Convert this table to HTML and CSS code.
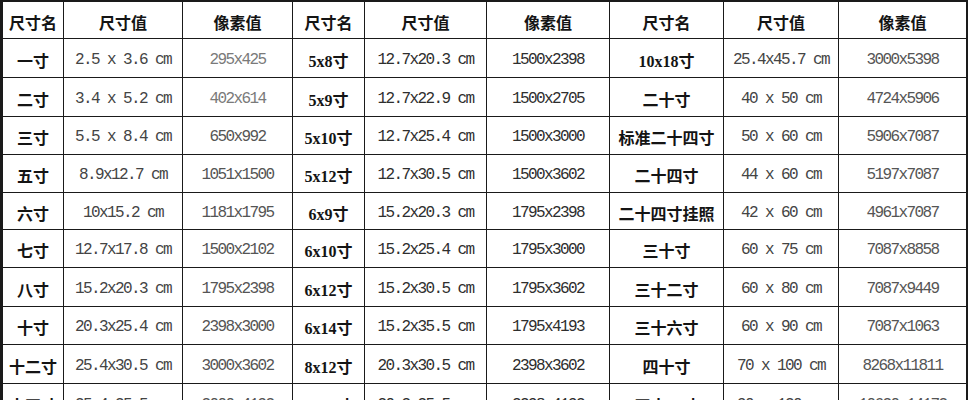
FILE: index.html
```html
<!DOCTYPE html>
<html lang="zh">
<head>
<meta charset="utf-8">
<title>照片尺寸对照表</title>
<link rel="stylesheet" href="styles.css">
</head>
<body>
<div class="sheet">
  <div class="c h">尺寸名</div><div class="c h">尺寸值</div><div class="c h">像素值</div><div class="c h">尺寸名</div><div class="c h">尺寸值</div><div class="c h">像素值</div><div class="c h">尺寸名</div><div class="c h">尺寸值</div><div class="c h">像素值</div>

  <div class="c n">一寸</div><div class="c v">2.5 x 3.6 cm</div><div class="c p light">295x425</div><div class="c m">5x8寸</div><div class="c v dark">12.7x20.3 cm</div><div class="c p dark">1500x2398</div><div class="c m">10x18寸</div><div class="c v">25.4x45.7 cm</div><div class="c p">3000x5398</div>

  <div class="c n">二寸</div><div class="c v">3.4 x 5.2 cm</div><div class="c p light">402x614</div><div class="c m">5x9寸</div><div class="c v dark">12.7x22.9 cm</div><div class="c p dark">1500x2705</div><div class="c n">二十寸</div><div class="c v">40 x 50 cm</div><div class="c p">4724x5906</div>

  <div class="c n">三寸</div><div class="c v">5.5 x 8.4 cm</div><div class="c p">650x992</div><div class="c m">5x10寸</div><div class="c v dark">12.7x25.4 cm</div><div class="c p dark">1500x3000</div><div class="c n">标准二十四寸</div><div class="c v">50 x 60 cm</div><div class="c p">5906x7087</div>

  <div class="c n">五寸</div><div class="c v">8.9x12.7 cm</div><div class="c p">1051x1500</div><div class="c m">5x12寸</div><div class="c v dark">12.7x30.5 cm</div><div class="c p dark">1500x3602</div><div class="c n">二十四寸</div><div class="c v">44 x 60 cm</div><div class="c p">5197x7087</div>

  <div class="c n">六寸</div><div class="c v">10x15.2 cm</div><div class="c p">1181x1795</div><div class="c m">6x9寸</div><div class="c v dark">15.2x20.3 cm</div><div class="c p dark">1795x2398</div><div class="c n">二十四寸挂照</div><div class="c v">42 x 60 cm</div><div class="c p">4961x7087</div>

  <div class="c n">七寸</div><div class="c v">12.7x17.8 cm</div><div class="c p">1500x2102</div><div class="c m">6x10寸</div><div class="c v dark">15.2x25.4 cm</div><div class="c p dark">1795x3000</div><div class="c n">三十寸</div><div class="c v">60 x 75 cm</div><div class="c p">7087x8858</div>

  <div class="c n">八寸</div><div class="c v">15.2x20.3 cm</div><div class="c p">1795x2398</div><div class="c m">6x12寸</div><div class="c v dark">15.2x30.5 cm</div><div class="c p dark">1795x3602</div><div class="c n">三十二寸</div><div class="c v">60 x 80 cm</div><div class="c p">7087x9449</div>

  <div class="c n">十寸</div><div class="c v">20.3x25.4 cm</div><div class="c p">2398x3000</div><div class="c m">6x14寸</div><div class="c v dark">15.2x35.5 cm</div><div class="c p dark">1795x4193</div><div class="c n">三十六寸</div><div class="c v">60 x 90 cm</div><div class="c p">7087x1063</div>

  <div class="c n">十二寸</div><div class="c v">25.4x30.5 cm</div><div class="c p">3000x3602</div><div class="c m">8x12寸</div><div class="c v dark">20.3x30.5 cm</div><div class="c p dark">2398x3602</div><div class="c n">四十寸</div><div class="c v">70 x 100 cm</div><div class="c p">8268x11811</div>

  <div class="c n">十四寸</div><div class="c v">25.4x35.5 cm</div><div class="c p">3000x4193</div><div class="c m">8x14寸</div><div class="c v dark">20.3x35.5 cm</div><div class="c p dark">2398x4193</div><div class="c n">四十八寸</div><div class="c v">90 x 120 cm</div><div class="c p">10630x14173</div>
</div>
</body>
</html>
```

FILE: styles.css
```css
html, body {
  margin: 0;
  padding: 0;
  background: #fff;
}

.sheet {
  width: 968px;
  box-sizing: border-box;
  display: grid;
  grid-template-columns: 60px 118px 109px 71px 121px 122px 113px 114px 127px;
  grid-template-rows: 36px 38px 38px 37px 37px 36px 37px 38px 37px 38px 38px;
  gap: 1px;
  padding: 2px 2px 0 3px;
  background: #1a1a1a;
}

.c {
  background: #fff;
  display: flex;
  align-items: center;
  justify-content: center;
  padding-top: 3px;
  box-sizing: border-box;
  white-space: nowrap;
  overflow: hidden;
}

.h, .n {
  font-family: "Noto Sans CJK SC", sans-serif;
  font-weight: 700;
  font-size: 16px;
  color: #141414;
}

.m {
  font-family: "Liberation Serif", "Noto Sans CJK SC", serif;
  font-weight: 700;
  font-size: 16px;
  color: #141414;
}

.v, .p {
  font-family: "Liberation Mono", monospace;
  font-size: 16px;
  letter-spacing: -1.6px;
  color: #444;
}

.p {
  color: #555;
}

.light {
  color: #7a7a7a;
}

.dark {
  color: #2e2e2e;
}
```
